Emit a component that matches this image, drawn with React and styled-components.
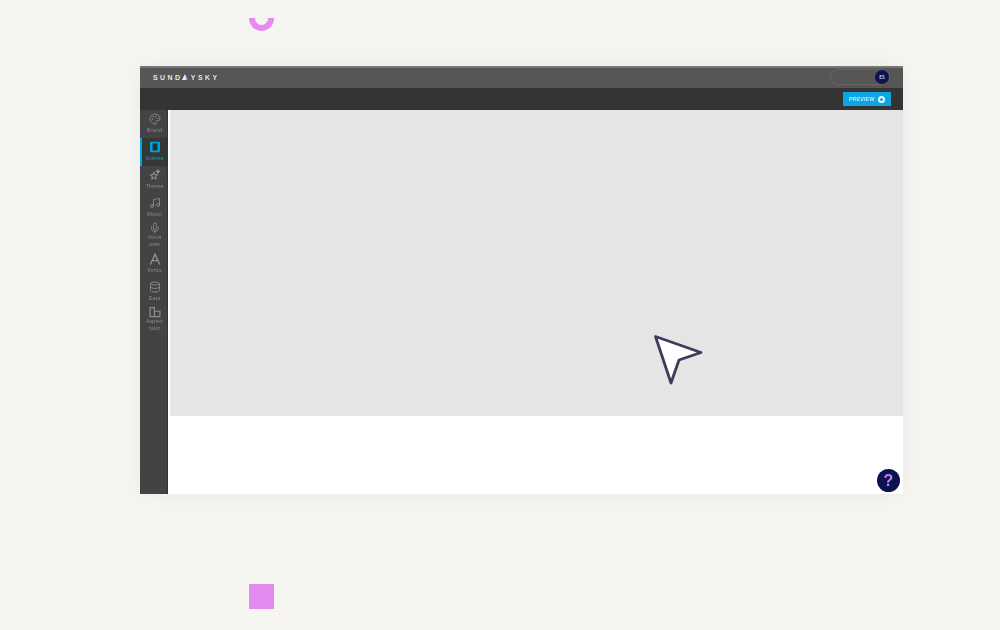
import React from 'react';
import styled, { createGlobalStyle } from 'styled-components';
import { Palette, Music, Mic, Database } from 'lucide-react';

const GlobalStyle = createGlobalStyle`
    html, body {
        margin: 0;
        padding: 0;
        background: #f6f5f2;
        font-family: "Open Sans", "Liberation Sans", sans-serif;
    }
`;

const navItems = [
    { label: ['Brand'], icon: <Palette size={12} strokeWidth={1.7} /> },
    { label: ['Scenes'], active: true, icon: <ScenesIcon /> },
    { label: ['Theme'], icon: <ThemeIcon /> },
    { label: ['Music'], icon: <Music size={12} strokeWidth={1.7} /> },
    { label: ['Voice', 'over'], icon: <Mic size={12} strokeWidth={1.7} /> },
    { label: ['Fonts'], icon: <FontIcon /> },
    { label: ['Data'], icon: <Database size={12} strokeWidth={1.7} /> },
    { label: ['Aspect', 'ratio'], icon: <AspectIcon /> },
];

function ScenesIcon() {
    return (
        <svg width="12" height="12" viewBox="0 0 11 11">
            <rect x="1" y="0.8" width="9" height="9.4" rx="1" fill="#00a6e0" />
            <rect x="3.2" y="2.2" width="4.6" height="6.6" fill="#1c3340" />
        </svg>
    );
}

function ThemeIcon() {
    return (
        <svg width="12" height="12" viewBox="0 0 12 12" fill="none" stroke="currentColor" strokeWidth="1.1">
            <path d="M5 3.4l1 2.2 2.3.3-1.700 1.600.4 2.400L5 8.800 2.900 9.900l.4-2.400L1.600 5.900l2.300-.3z" />
            <path d="M9 .8l.5 1.200 1.200.5-1.200.5L9 4.200l-.5-1.200-1.200-.5 1.200-.5z" />
        </svg>
    );
}

function FontIcon() {
    return (
        <svg width="12" height="12" viewBox="0 0 11 11" fill="none" stroke="currentColor" strokeWidth="1.3">
            <path d="M1.200 10.500L5.500 1l4.300 9.500M3 7h5" />
        </svg>
    );
}

function AspectIcon() {
    return (
        <svg width="12" height="12" viewBox="0 0 11 11" fill="none" stroke="currentColor" strokeWidth="1.1">
            <path d="M1 9.800V1.500h4v3.300h5v5z" />
            <path d="M5 4.800v5" />
        </svg>
    );
}

const App = () => {
    return (
        <Page>
            <GlobalStyle />
            <TopArc />
            <Window>
                <TopBar>
                    <Logo>
                        SUND
                        <LogoMark viewBox="0 0 6 6">
                            <defs>
                                <linearGradient id="logoMark" x1="0" x2="1" y1="0" y2="0">
                                    <stop offset="0.4" stopColor="#f4f0fa" />
                                    <stop offset="1" stopColor="#9a5cf0" />
                                </linearGradient>
                            </defs>
                            <path d="M3 0l3 6H0z" fill="url(#logoMark)" />
                        </LogoMark>
                        YSKY
                    </Logo>
                    <SearchPill>
                        <Avatar>ES</Avatar>
                    </SearchPill>
                </TopBar>
                <ActionBar>
                    <PreviewButton>
                        PREVIEW
                        <PreviewDot />
                    </PreviewButton>
                </ActionBar>
                <Body>
                    <Sidebar>
                        {navItems.map((item) => (
                            <NavItem key={item.label[0]} active={item.active} twoLines={item.label.length > 1}>
                                <NavIcon>{item.icon}</NavIcon>
                                <NavText twoLines={item.label.length > 1}>
                                    {item.label.map((line) => (
                                        <NavLabel key={line}>{line}</NavLabel>
                                    ))}
                                </NavText>
                            </NavItem>
                        ))}
                    </Sidebar>
                    <Main>
                        <Canvas>
                            <Pointer viewBox="0 0 50 52">
                                <path
                                    d="M2.500 2.500L48 18.500 26 26 18 49z"
                                    fill="#fff"
                                    stroke="#3f3a5e"
                                    strokeWidth="2.800"
                                    strokeLinejoin="round"
                                />
                            </Pointer>
                        </Canvas>
                        <Footer />
                        <HelpButton>?</HelpButton>
                    </Main>
                </Body>
            </Window>
            <BottomSquare />
        </Page>
    );
};

const Page = styled.div`
    position: relative;
    width: 1000px;
    height: 630px;
    overflow: hidden;
    box-sizing: border-box;
    padding: 66px 97px 0 140px;
`;

const TopArc = styled.div`
    position: absolute;
    left: 249px;
    top: 18px;
    width: 25px;
    height: 13px;
    box-sizing: border-box;
    border: 6px solid #e78cee;
    border-top: 0;
    border-radius: 0 0 13px 13px;
`;

const BottomSquare = styled.div`
    position: absolute;
    left: 249px;
    top: 584px;
    width: 25px;
    height: 25px;
    background: #e58bf0;
`;

const Window = styled.div`
    width: 763px;
    height: 428px;
    display: flex;
    flex-direction: column;
    background: #fff;
    box-shadow: 0 0 24px rgba(0, 0, 0, 0.05);
    filter: blur(0.4px);
`;

const TopBar = styled.div`
    height: 22px;
    flex: none;
    box-sizing: border-box;
    padding: 0 13px;
    display: flex;
    align-items: center;
    justify-content: space-between;
    background: #565656;
    box-shadow: inset 0 2px 0 #777;
`;

const Logo = styled.div`
    display: flex;
    align-items: center;
    font-family: "Liberation Sans", sans-serif;
    font-size: 7px;
    font-weight: 700;
    letter-spacing: 2.400px;
    color: #e6e6e6;
`;

const LogoMark = styled.svg`
    width: 6px;
    height: 6px;
    margin-right: 2.400px;
`;

const SearchPill = styled.div`
    width: 60px;
    height: 16px;
    box-sizing: border-box;
    border: 1px solid #666;
    border-radius: 8px;
    display: flex;
    align-items: center;
    justify-content: flex-end;
`;

const Avatar = styled.div`
    width: 14px;
    height: 14px;
    border-radius: 50%;
    background: #0c1450;
    color: #dfe3f2;
    font-size: 5px;
    font-weight: 600;
    display: flex;
    align-items: center;
    justify-content: center;
`;

const ActionBar = styled.div`
    height: 22px;
    flex: none;
    box-sizing: border-box;
    padding-right: 12px;
    display: flex;
    align-items: center;
    justify-content: flex-end;
    background: #343434;
`;

const PreviewButton = styled.div`
    width: 48px;
    height: 14px;
    box-sizing: border-box;
    padding: 0 6px;
    display: flex;
    align-items: center;
    justify-content: space-between;
    background: #0ca6e2;
    color: #c8e8f6;
    font-family: "Liberation Sans", sans-serif;
    font-size: 5.500px;
    font-weight: 700;
`;

const PreviewDot = styled.span`
    width: 3px;
    height: 3px;
    border: 2.500px solid #e9f7fd;
    border-radius: 50%;
`;

const Body = styled.div`
    flex: 1;
    display: flex;
    min-height: 0;
`;

const Sidebar = styled.div`
    width: 28px;
    flex: none;
    box-sizing: border-box;
    background: #434343;
    border-right: 1px solid #333;
`;

const NavItem = styled.div`
    height: 28px;
    box-sizing: border-box;
    padding-top: ${props => props.twoLines ? '0' : '3px'};
    display: flex;
    flex-direction: column;
    align-items: center;
    color: ${props => props.active ? '#00a6e0' : '#8e8e8e'};
    background: ${props => props.active ? '#363636' : 'transparent'};
    border-left: 2px solid ${props => props.active ? '#00a6e0' : 'transparent'};
`;

const NavIcon = styled.div`
    height: 12px;
    display: flex;
    align-items: center;
    justify-content: center;
`;

const NavText = styled.div`
    margin-top: ${props => props.twoLines ? '0' : '2px'};
    text-align: center;
`;

const NavLabel = styled.div`
    font-size: 5.500px;
    line-height: 7px;
    white-space: nowrap;
`;

const Main = styled.div`
    position: relative;
    flex: 1;
    display: flex;
    flex-direction: column;
    padding-left: 2px;
`;

const Canvas = styled.div`
    position: relative;
    height: 306px;
    flex: none;
    background: #e5e5e5;
`;

const Pointer = styled.svg`
    position: absolute;
    left: 483px;
    top: 224px;
    width: 50px;
    height: 52px;
`;

const Footer = styled.div`
    flex: 1;
    background: #fff;
`;

const HelpButton = styled.div`
    position: absolute;
    right: 3px;
    bottom: 2px;
    width: 23px;
    height: 23px;
    border-radius: 50%;
    background: #0c1150;
    color: #c583f2;
    font-family: "Liberation Sans", sans-serif;
    font-size: 16px;
    font-weight: 700;
    display: flex;
    align-items: center;
    justify-content: center;
`;

export default App;
